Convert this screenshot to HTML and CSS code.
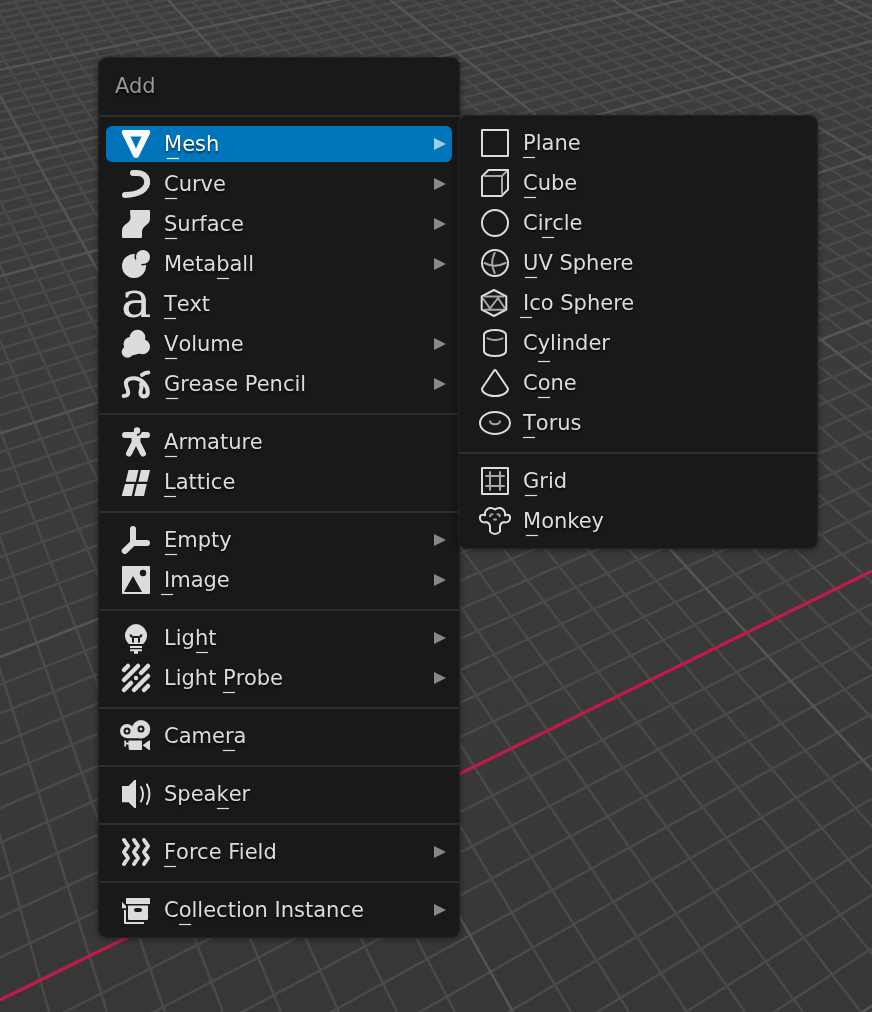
FILE: index.html
```html
<!DOCTYPE html>
<html lang="en">
<head>
<meta charset="utf-8">
<title>Add</title>
<link rel="stylesheet" href="styles.css">
</head>
<body>
<svg class="viewport" viewBox="0 0 872 1012" preserveAspectRatio="xMidYMid slice" aria-hidden="true">
  <g id="minor" class="grid-minor"></g>
  <g id="major" class="grid-major"></g>
  <g id="axis" class="grid-axis"></g>
</svg>
<svg class="defs" aria-hidden="true">
  <symbol id="arrow" viewBox="0 0 12 14"><path d="M0 1v12l12-6z" fill="currentColor"/></symbol>
</svg>

<main class="stage">
  <div class="menu menu-add" role="menu" aria-labelledby="menu-title">
    <h1 class="menu-title" id="menu-title">Add</h1>
    <hr class="rule">
    <div class="group">
      <button class="item is-active" role="menuitem">
        <svg class="icon" viewBox="0 0 32 32"><path fill-rule="evenodd" d="M4 2h24q2.800 0 2.200 3L18.600 28.700q-2.600 2.600-5.200 0L1.800 5Q1.200 2 4 2zM10.500 8.500 16 20.500 21.500 8.500z"/></svg>
        <span class="label"><span class="key">M</span>esh</span><svg class="arrow"><use href="#arrow"/></svg>
      </button>
      <button class="item" role="menuitem">
        <svg class="icon" viewBox="0 0 32 32"><path class="s6" d="M13 5h4c12 0 13.500 13 4 18.300C16 26.300 10 27 5 27"/></svg>
        <span class="label"><span class="key">C</span>urve</span><svg class="arrow"><use href="#arrow"/></svg>
      </button>
      <button class="item" role="menuitem">
        <svg class="icon" viewBox="0 0 32 32"><path d="M11 2h18q1 0 1 1v8c0 6-8 6.500-8 13v5q0 1-1 1H3q-1 0-1-1v-6c0-8 9-7 8.500-14C10.400 7 10 5 10 3q0-1 1-1z"/></svg>
        <span class="label"><span class="key">S</span>urface</span><svg class="arrow"><use href="#arrow"/></svg>
      </button>
      <button class="item" role="menuitem">
        <svg class="icon" viewBox="0 0 32 32"><circle cx="14" cy="18" r="12"/><circle class="cut" cx="23" cy="9" r="8.500"/><circle cx="23" cy="9" r="7"/><path d="M15.500 11l4.500-1 3 4-2 3-6 2z"/></svg>
        <span class="label">Meta<span class="key">b</span>all</span><svg class="arrow"><use href="#arrow"/></svg>
      </button>
      <button class="item" role="menuitem">
        <svg class="icon" viewBox="0 0 32 32" aria-hidden="true"><text class="glyph" x="1" y="29">a</text></svg>
        <span class="label"><span class="key">T</span>ext</span>
      </button>
      <button class="item" role="menuitem">
        <svg class="icon" viewBox="0 0 32 32"><circle cx="17.500" cy="9.500" r="7.800"/><circle cx="22.500" cy="18.700" r="7.500"/><circle cx="10.500" cy="16" r="7"/><circle cx="7.500" cy="24" r="5.800"/><path d="M4 18l8-9h12l3 12-9 5-6 1.500z"/></svg>
        <span class="label"><span class="key">V</span>olume</span><svg class="arrow"><use href="#arrow"/></svg>
      </button>
      <button class="item" role="menuitem">
        <svg class="icon" viewBox="0 0 32 32"><path class="s4" d="M3.700 28C10 28 8.500 23 6.500 18.500 4 12.500 9 9.700 15 10.200c7 .6 13 8 12.800 14 0 5-5.800 5.500-7.300 1.600-1-3 2.500-5.500.5-9.500M22 6.800Q25 4.500 28.300 4.500"/></svg>
        <span class="label"><span class="key">G</span>rease Pencil</span><svg class="arrow"><use href="#arrow"/></svg>
      </button>
    </div>
    <hr class="rule">
    <div class="group">
      <button class="item" role="menuitem">
        <svg class="icon" viewBox="0 0 32 32"><path class="s6" d="M5 9h22M14.500 11.500v5l-5.500 11M17.500 11.500v5l5.500 11"/><path class="cut-line" d="M21 4.500Q21 8 17 9"/><circle cx="17" cy="4.500" r="3.200"/></svg>
        <span class="label"><span class="key">A</span>rmature</span>
      </button>
      <button class="item" role="menuitem">
        <svg class="icon" viewBox="0 0 32 32"><path d="M9.500 4h9l-2.700 11.700H5.700L8.500 4zM21.500 4H30l-2.700 11.700h-9L21 4zM5 18h9.500l-2.800 12h-10zM17 18h9.700L24 30h-9.700z"/></svg>
        <span class="label"><span class="key">L</span>attice</span>
      </button>
    </div>
    <hr class="rule">
    <div class="group">
      <button class="item" role="menuitem">
        <svg class="icon" viewBox="0 0 32 32"><path class="s6" d="M13 5v14h14M13 19l-8.300 8"/></svg>
        <span class="label"><span class="key">E</span>mpty</span><svg class="arrow"><use href="#arrow"/></svg>
      </button>
      <button class="item" role="menuitem">
        <svg class="icon" viewBox="0 0 32 32"><path fill-rule="evenodd" d="M3 2h26q1 0 1 1v26q0 1-1 1H3q-1 0-1-1V3q0-1 1-1zM4 28h18L13 12zM26.200 9a3.200 3.200 0 1 0-6.400 0 3.200 3.200 0 0 0 6.400 0z"/></svg>
        <span class="label"><span class="key">I</span>mage</span><svg class="arrow"><use href="#arrow"/></svg>
      </button>
    </div>
    <hr class="rule">
    <div class="group">
      <button class="item" role="menuitem">
        <svg class="icon" viewBox="0 0 32 32"><path d="M16 2a12 11.500 0 0 1 5.500 21.200q-.5.300-1 .300h-9q-.5 0-1-.300A12 11.500 0 0 1 16 2zM10 24h12v2H10zM10 27.300h12v2h-4v2.400h-4v-2.400h-4z"/><path class="gap" d="M9 23h14"/><path class="dark" d="M13 20.500V15M19 20.500V15M10.500 12.500q.5 2.500 2.500 2.500h6q2 0 2.500-2.500"/></svg>
        <span class="label">Lig<span class="key">h</span>t</span><svg class="arrow"><use href="#arrow"/></svg>
      </button>
      <button class="item" role="menuitem">
        <svg class="icon" viewBox="0 0 32 32"><path class="s4 wide" d="M4 8l4-4M4 18 18 4M4 28l7-7M21 11l7-7M14 28l14-14M24 28l4-4"/><circle cx="16" cy="16" r="2.200"/></svg>
        <span class="label">Light <span class="key">P</span>robe</span><svg class="arrow"><use href="#arrow"/></svg>
      </button>
    </div>
    <hr class="rule">
    <div class="group">
      <button class="item" role="menuitem">
        <svg class="icon" viewBox="0 0 32 32"><circle cx="7" cy="11" r="7"/><circle cx="21" cy="9.200" r="9.200"/><path d="M7 12h14v6.300H7zM4.300 20.500H6v2h2.500v-2h13q.5 0 .5.500v8.500q0 .5-.5.500H10q-1 0-1.200-1l-.5-4.500H6v2H4.300zM22.500 25.300 29 20.500h1V30h-1z"/><g class="dark"><circle cx="7" cy="11" r="2.500"/><circle cx="21" cy="9" r="2.500"/></g></svg>
        <span class="label">Came<span class="key">r</span>a</span>
      </button>
    </div>
    <hr class="rule">
    <div class="group">
      <button class="item" role="menuitem">
        <svg class="icon" viewBox="0 0 32 32"><path d="M2 8h6.500l6-6H16v28h-1.500l-6-5.700H2z"/><path class="s2" d="M21 9q4 7 0 14.500M27 6.500q5 9.500 0 19.500"/></svg>
        <span class="label">Spea<span class="key">k</span>er</span>
      </button>
    </div>
    <hr class="rule">
    <div class="group">
      <button class="item" role="menuitem">
        <svg class="icon" viewBox="0 0 32 32"><path class="s4" d="M4 4l4 6-4 6 4 6-4 6M14 4l4 6-4 6 4 6-4 6M24 4l4 6-4 6 4 6-4 6"/></svg>
        <span class="label"><span class="key">F</span>orce Field</span><svg class="arrow"><use href="#arrow"/></svg>
      </button>
    </div>
    <hr class="rule">
    <div class="group">
      <button class="item" role="menuitem">
        <svg class="icon" viewBox="0 0 32 32"><path fill-rule="evenodd" d="M6.500 4h23q.5 0 .5.500v5q0 .5-.5.500h-23Q6 10 6 9.500v-5Q6 4 6.500 4zM8 11.500h20V25q0 1-1 1H9q-1 0-1-1zM16 14a2 2 0 0 0 0 4h4a2 2 0 0 0 0-4zM2 8l4 4v2.300H2zM4 16h2v12h18v2H5q-1 0-1-1z"/></svg>
        <span class="label">C<span class="key">o</span>llection Instance</span><svg class="arrow"><use href="#arrow"/></svg>
      </button>
    </div>
  </div>

  <div class="menu menu-mesh" role="menu" aria-label="Mesh">
    <div class="group">
      <button class="item" role="menuitem">
        <svg class="icon line" viewBox="0 0 32 32"><path d="M3 3h26v26H3z"/></svg>
        <span class="label"><span class="key">P</span>lane</span>
      </button>
      <button class="item" role="menuitem">
        <svg class="icon line" viewBox="0 0 32 32"><path class="dim" d="M6 9h17v17M23 9l5.500-5.500"/><path d="M3 9.500 9.500 3H29v19.500L22.500 29H3z"/></svg>
        <span class="label"><span class="key">C</span>ube</span>
      </button>
      <button class="item" role="menuitem">
        <svg class="icon line" viewBox="0 0 32 32"><circle cx="16" cy="16" r="13"/></svg>
        <span class="label">Ci<span class="key">r</span>cle</span>
      </button>
      <button class="item" role="menuitem">
        <svg class="icon line" viewBox="0 0 32 32"><path class="dim" d="M15.700 6q-5 10 0 20M5.500 16q10 5.500 21 0"/><circle cx="16" cy="16" r="13"/></svg>
        <span class="label"><span class="key">U</span>V Sphere</span>
      </button>
      <button class="item" role="menuitem">
        <svg class="icon line" viewBox="0 0 32 32"><path class="dim" d="M6 9.500h18.500M6 22.700h18.500M4 11.500l7 10 8-10.500 7 10.500"/><path d="M15 3l12.300 6.300v13.400L15 29 2.700 22.700V9.300z"/></svg>
        <span class="label"><span class="key">I</span>co Sphere</span>
      </button>
      <button class="item" role="menuitem">
        <svg class="icon line" viewBox="0 0 32 32"><path class="dim" d="M8.500 11.300q7.500 3.200 15 0"/><path d="M5 8c0-6.700 22-6.700 22 0v16c0 6.700-22 6.700-22 0z"/></svg>
        <span class="label">C<span class="key key-low">y</span>linder</span>
      </button>
      <button class="item" role="menuitem">
        <svg class="icon line" viewBox="0 0 32 32"><path d="M15 3.700q1-1.400 2 0l11.500 17C30.500 24 25 29 16 29S1.500 24 3.500 20.700z"/></svg>
        <span class="label">C<span class="key">o</span>ne</span>
      </button>
      <button class="item" role="menuitem">
        <svg class="icon line" viewBox="0 0 32 32"><path class="dim" d="M11 14.300c1 4 9 4 10 0"/><ellipse cx="16" cy="16" rx="15" ry="11"/></svg>
        <span class="label"><span class="key">T</span>orus</span>
      </button>
    </div>
    <hr class="rule">
    <div class="group">
      <button class="item" role="menuitem">
        <svg class="icon line" viewBox="0 0 32 32"><path class="dim" d="M11 7v18M21 7v18M7 11h18M7 21h18"/><path d="M3 3h26v26H3z"/></svg>
        <span class="label"><span class="key">G</span>rid</span>
      </button>
      <button class="item" role="menuitem">
        <svg class="icon line" viewBox="0 0 32 32"><path class="dim" d="M11 11.300q.3-2 2.500-2M18.500 9.300q2.200 0 2.200 2M15 14.500h2"/><path d="M16 4.500Q18.500 2.500 21.500 3 25.500 4.500 26 8v2.500q2-1.500 4.500 0 1.500 3.500-1 6Q27 18 25.500 17 21 17.500 21 22v4.500Q19 29 16 29t-5-2.500V22Q11 17.500 6.500 17 5 18 2.500 16.500q-2.500-2.500-1-6 2.500-1.500 4.500 0V8Q6.500 4.500 10.500 3 13.500 2.500 16 4.500z"/></svg>
        <span class="label"><span class="key">M</span>onkey</span>
      </button>
    </div>
  </div>
</main>
<script src="grid.js"></script>
</body>
</html>
```
FILE: styles.css
```css
* { box-sizing: border-box; }

body {
  margin: 0;
  min-height: 100vh;
  background: #3a3a3a;
  font-family: "DejaVu Sans", sans-serif;
  font-size: 21px;
  color: #dcdcdc;
}

.viewport {
  position: fixed;
  inset: 0;
  width: 100%;
  height: 100%;
  background: linear-gradient(#3d3d3d, #373737);
}
.grid-minor { stroke: #494949; stroke-width: 2.600; }
.grid-major { stroke: #545454; stroke-width: 2.600; }
.grid-axis { stroke: #bb1c48; stroke-width: 3.400; }

.defs {
  position: absolute;
  width: 0;
  height: 0;
}

.stage {
  position: relative;
  display: flex;
  align-items: flex-start;
  padding: 58px 0 58px 99px;
}

.menu {
  flex: none;
  background: #191919;
  border-radius: 8px;
  box-shadow: 0 0 0 1px #232323, 0 1px 6px 1px rgba(0, 0, 0, 0.45);
}
.menu-add { width: 360px; padding-bottom: 7px; }
.menu-mesh { width: 358px; margin-top: 58px; padding: 7px 0; }

.menu-title {
  margin: 0;
  padding: 10px 16px;
  font-size: 21px;
  font-weight: 400;
  line-height: 36px;
  color: #989898;
  text-shadow: 0 2px 2px #000;
}

.rule {
  height: 2px;
  margin: 9px 0 7px;
  border: 0;
  background: #2e2e2e;
}
.menu-title + .rule { margin-top: 1px; }

.group {
  display: flex;
  flex-direction: column;
  gap: 4px;
  padding: 2px 7px;
}

.item {
  display: flex;
  align-items: center;
  gap: 12px;
  height: 36px;
  padding: 0 6px 0 14px;
  border: 0;
  border-radius: 6px;
  background: none;
  color: inherit;
  font: inherit;
  line-height: 36px;
  text-align: left;
}
.menu-mesh .item { padding-left: 13px; }
.item.is-active { background: #0075bb; color: #fff; }

.label {
  flex: 1;
  white-space: nowrap;
  text-shadow: 0 2px 2px rgba(0, 0, 0, 0.6);
}

.key { position: relative; }
.key::after {
  content: "";
  position: absolute;
  left: 50%;
  bottom: -3px;
  width: 12px;
  height: 1px;
  margin-left: -6px;
  background: currentColor;
  box-shadow: 0 0 1px currentColor;
}
.key-low::after { bottom: -7px; }

.arrow {
  flex: none;
  width: 12px;
  height: 14px;
  color: #888;
}
.is-active .arrow { color: #a6c9e3; }

.icon {
  flex: none;
  width: 32px;
  height: 32px;
  overflow: visible;
  fill: currentColor;
}
.s2, .s4, .s6 {
  fill: none;
  stroke: currentColor;
  stroke-linecap: round;
  stroke-linejoin: round;
}
.s2 { stroke-width: 2; }
.s4 { stroke-width: 4; }
.s6 { stroke-width: 6; }
.s4.wide { stroke-width: 4.500; }
.cut { fill: #191919; }
.cut-line { fill: none; stroke: #191919; stroke-width: 2; }
.gap { fill: none; stroke: #191919; stroke-width: 2; }
.dark { fill: none; stroke: #191919; stroke-width: 2; }
.glyph {
  font-family: "DejaVu Serif", serif;
  font-size: 51px;
}

.line {
  fill: none;
  stroke: currentColor;
  stroke-width: 2;
  stroke-linejoin: round;
  stroke-linecap: round;
}
.line .dim { stroke: #a6a6a6; }
```
FILE: grid.js
```js
// Draws the ground plane: two families of lines in perspective, major every ten.
const layers = {
  minor: document.getElementById("minor"),
  major: document.getElementById("major"),
  axis: document.getElementById("axis"),
};

function line(layer, x1, y1, x2, y2) {
  const el = document.createElementNS("http://www.w3.org/2000/svg", "line");
  el.setAttribute("x1", x1);
  el.setAttribute("y1", y1);
  el.setAttribute("x2", x2);
  el.setAttribute("y2", y2);
  layers[layer].appendChild(el);
}

// Lines parallel to the X axis, by their height at the left and right edges.
for (let v = -14; v <= 62; v++) {
  const w = 1 + 0.02673 * v;
  const layer = v === 0 ? "axis" : v % 10 === 0 ? "major" : "minor";
  line(layer, 0, (1000 - 16.74 * v) / w, 872, (571 - 16.58 * v) / w);
}

// Lines parallel to the Y axis, by their position at the top and bottom edges.
for (let u = -12; u <= 44; u++) {
  line(u % 10 === 0 ? "major" : "minor", -53.7 + 22.2 * u, 0, 513 + 58 * u, 1012);
}
```
